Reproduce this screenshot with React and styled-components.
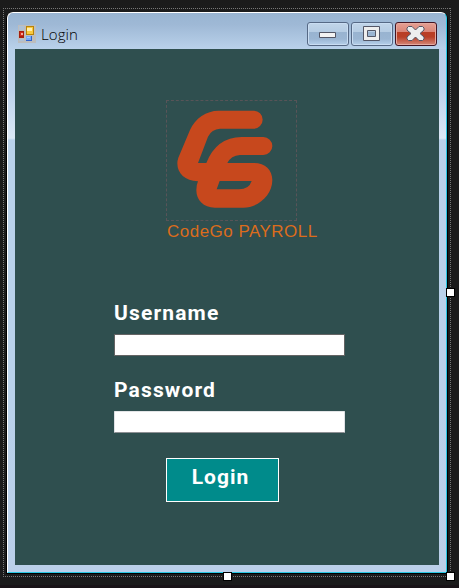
import React from "react";
import styled, { createGlobalStyle, css } from "styled-components";

const Global = createGlobalStyle`
  *{box-sizing:border-box}
  body{margin:0;background:#1b1b1b;overflow:hidden}
`;
const Designer = styled.main`
  position:relative;width:459px;height:588px;padding:12px 0 0 6px;
  background:linear-gradient(#1b1b1b 585px,#191317 585px);
`;
const Selection = styled.div`
  position:absolute;left:3px;top:8px;width:448px;height:569px;
  --dot:#777;
  background:
    repeating-linear-gradient(90deg,var(--dot) 0 1px,transparent 1px 2px) 0 0/100% 1px no-repeat,
    repeating-linear-gradient(90deg,var(--dot) 0 1px,transparent 1px 2px) 0 100%/100% 1px no-repeat,
    repeating-linear-gradient(var(--dot) 0 1px,transparent 1px 2px) 0 0/1px 100% no-repeat,
    repeating-linear-gradient(var(--dot) 0 1px,transparent 1px 2px) 100% 0/1px 100% no-repeat;
`;
const Handle = styled.i`
  position:absolute;left:${p => p.$x}px;top:${p => p.$y}px;
  width:9px;height:9px;background:#fff;border:1px solid #000;
`;
const Window = styled.section`
  position:relative;width:442px;height:562px;padding:0 1px 1px;
  background:#000;border-radius:7px 7px 0 0;
`;
const Frame = styled.div`
  display:flex;flex-direction:column;width:440px;height:561px;padding:0 7px 7px;
  border:solid;border-width:1px;border-color:#fff #28c8e4 #28c8e4 #fff;
  border-radius:6px 6px 0 0;
  background:
    linear-gradient(#b9d1ea,#bdd2ec 45%,#dce7f5 98%,#b9d1ea) 0 36px/7px 91px no-repeat,
    linear-gradient(#b9cde8,#bdd2ec 45%,#dce7f5 98%,#b9d1ea) 100% 36px/7px 91px no-repeat,
    linear-gradient(#99b4d1,#9fb9d6 12px,#b9d1ea 36px,#b9d1ea 70%,#bbcfe9);
`;
const TitleBar = styled.header`
  display:flex;align-items:flex-start;height:36px;flex:none;padding:9px 2px 0 3px;
`;
const AppIcon = styled.svg`width:18px;height:18px;margin-top:3px;flex:none;`;
const Title = styled.h1`
  margin:2px 0 0 5px;flex:1;color:#000;
  font:300 15px/20px "Open Sans","Noto Sans",sans-serif;letter-spacing:.1px;
`;
const Controls = styled.div`display:flex;gap:2px;`;
const Control = styled.button`
  width:42px;height:24px;padding:0;border:1px solid #566985;border-radius:3px;
  background:linear-gradient(#c1d5e9,#b5cce3 9px,#98b3d0 9px,#9bb6d3 16px,#b6d0ea);
  box-shadow:inset 0 0 0 1px #c9ddf2;
  svg{display:block;width:40px;height:22px}
  ${p => p.$close && css`
    border-color:#431422;
    background:linear-gradient(#e5a094,#d98476 9px,#b93d24 9px,#b93f27 14px,#d48878);
    box-shadow:inset 0 0 0 1px #e5a99f;
  `}
`;
const Form = styled.form`
  display:flex;flex-direction:column;width:424px;height:516px;padding:51px 0 0 99px;background:#2f4f4f;
`;
const Brand = styled.div`margin-left:52px;height:201px;`;
const LogoBox = styled.div`
  width:131px;height:121px;border:1px dashed #585458;
  svg{display:block;width:129px;height:119px}
`;
const BrandName = styled.div`
  width:160px;margin-left:1px;color:#dc6c1c;white-space:nowrap;
  font:400 17px/21px "Liberation Sans",Arial,sans-serif;letter-spacing:.48px;
`;
const Field = styled.label`
  display:block;height:77px;color:#fff;
  font:700 21px/24px Roboto,"Liberation Sans",sans-serif;letter-spacing:1.15px;
`;
const Input = styled.input`
  display:block;width:231px;height:22px;margin-top:9px;padding:0 4px;outline:0;
  background:#fff;border:1px solid #646464;font:16px "Liberation Sans",sans-serif;
  ${p => p.$soft && css`border-color:#e3e5e7 #dfe1e5 #8d9094;border-radius:1px;`}
`;
const Submit = styled.button`
  width:113px;height:44px;margin:3px 0 0 52px;padding:0 4px 6px 0;color:#fff;
  background:#008b8b;border:1px solid #fff;
  font:700 21px/30px Roboto,"Liberation Sans",sans-serif;letter-spacing:1px;
`;

function FormIcon() {
  return <AppIcon viewBox="0 0 18 18" shapeRendering="crispEdges">
    <path fill="#bdbdbd" d="M0 0h18v18H0z"/>
    <path fill="#aec1d6" d="M1 1h5v4H1zM1 14h5v2H1z"/>
    <path fill="#a51d0d" d="M1 6h5v7H1z"/><path fill="#d22b1b" d="M2 7h3v4H2z"/><path fill="#f5a89a" d="M3 8h2v2H3z"/>
    <path fill="#b98205" d="M8 1h8v9H8z"/><path fill="#f9c93e" d="M9 2h6v7H9z"/><path fill="#ffeeb0" d="M9 3h5v3H9z"/>
    <path fill="#2f62cf" d="M8 11h6v5H8z"/><path fill="#75a9f5" d="M8 11h5v4H8z"/><path fill="#a5c8ff" d="M9 12h3v1H9z"/>
  </AppIcon>;
}
function Logo() {
  return <svg viewBox="36 33 387 357">
    <path fill="#c7481d" fillRule="evenodd" d="M296 62a27 27 0 0 1 0 54H195Q170 117 159 140L129 219H154Q184 142 260 141H325a27 27 0 0 1 0 54H255Q228 197 217 219H297C331 219 352 240 352 270C352 315 310 353 265 353H180C145 353 124 330 124 300Q124 285 129 274C90 273 67 250 67 220Q67 212 70 203L105 120C120 85 155 62 190 62ZM194 273H290Q282 298 252 298H185Z"/>
  </svg>;
}

export default function App() {
  return <><Global/><Designer>
    <Selection/>
    <Window><Frame>
      <TitleBar>
        <FormIcon/><Title>Login</Title>
        <Controls>
          <Control type="button" aria-label="Minimize"><svg viewBox="0 0 40 22"><path d="M11.5 9.5h16v5h-16z" fill="#f3f3f3" stroke="#535666"/></svg></Control>
          <Control type="button" aria-label="Maximize"><svg viewBox="0 0 40 22"><path fillRule="evenodd" d="M11.5 3.5h16v14h-16zM15.5 7.5v6h8v-6z" fill="#eee" stroke="#535666"/></svg></Control>
          <Control $close type="button" aria-label="Close"><svg viewBox="0 0 40 22"><path d="M12.500 3.500h3.500l3.500 3.500 3.500-3.500h3.500l1.500 1.500v2l-4 3.500 4 3.500v2l-1.500 1.500h-3.500l-3.500-3.500-3.500 3.500h-3.500l-1.500-1.500v-2l4-3.500-4-3.500v-2Z" fill="#eee" stroke="#535666"/></svg></Control>
        </Controls>
      </TitleBar>
      <Form>
        <Brand><LogoBox><Logo/></LogoBox><BrandName>CodeGo PAYROLL</BrandName></Brand>
        <Field>Username<Input/></Field>
        <Field>Password<Input $soft type="password"/></Field>
        <Submit type="button">Login</Submit>
      </Form>
    </Frame></Window>
    <Handle $x={446} $y={288}/><Handle $x={223} $y={572}/><Handle $x={446} $y={572}/>
  </Designer></>;
}
